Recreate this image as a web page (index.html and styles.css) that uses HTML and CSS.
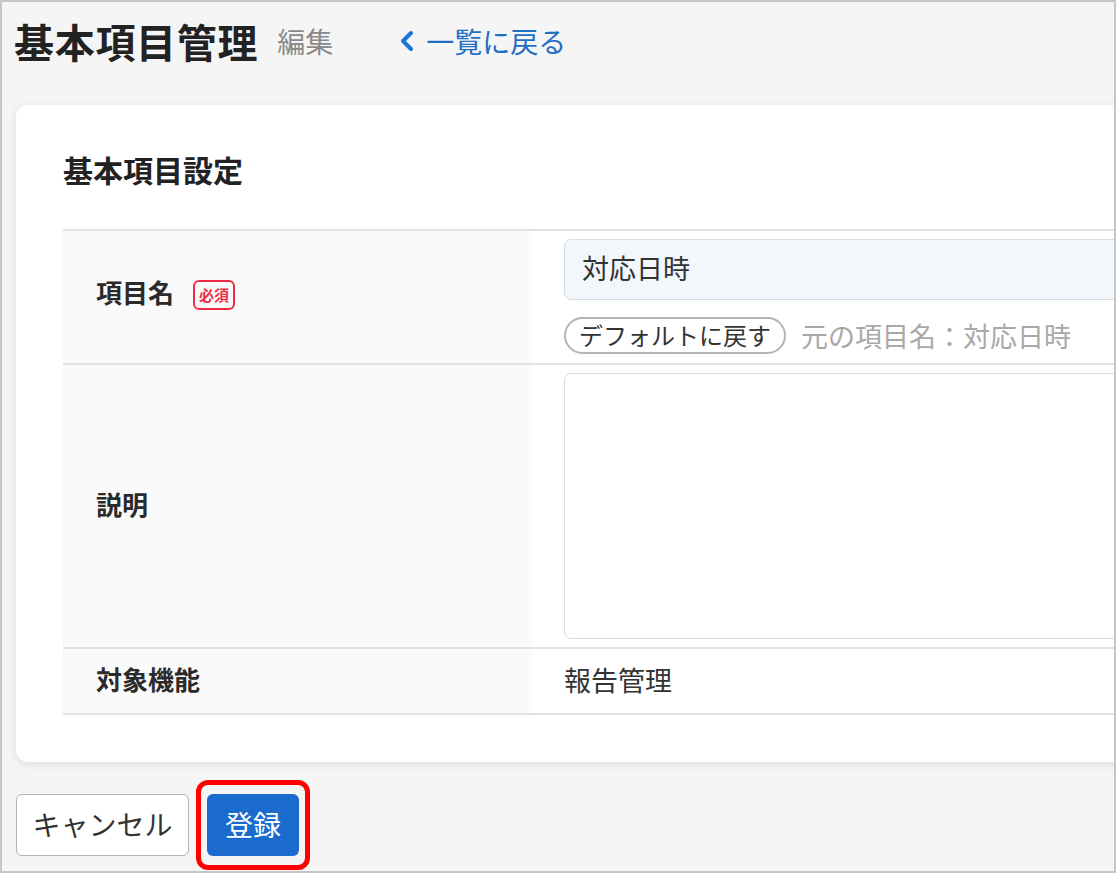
FILE: index.html
```html
<!DOCTYPE html>
<html lang="ja">
<head>
    <meta charset="UTF-8">
    <meta name="viewport" content="width=device-width, initial-scale=1.0">
    <title>基本項目管理 編集</title>
    <link rel="stylesheet" href="styles.css">
</head>
<body>
    <div class="screen">
        <!-- Page header -->
        <header class="page-header">
            <h1 class="page-title">基本項目管理</h1>
            <span class="page-mode">編集</span>
            <a class="back-link" href="#">
                <svg class="back-icon" width="14" height="22" viewBox="0 0 14 22" aria-hidden="true">
                    <polyline points="11,3 3,11 11,19" fill="none" stroke="currentColor" stroke-width="4" stroke-linecap="round" stroke-linejoin="round"/>
                </svg>
                一覧に戻る
            </a>
        </header>

        <!-- Settings card -->
        <section class="card">
            <h2 class="card-title">基本項目設定</h2>
            <table class="form-table">
                <tr class="row-name">
                    <th>項目名<span class="badge-required">必須</span></th>
                    <td>
                        <input class="text-input" type="text" value="対応日時">
                        <div class="default-row">
                            <button class="btn-pill" type="button">デフォルトに戻す</button>
                            <span class="original-name">元の項目名：対応日時</span>
                        </div>
                    </td>
                </tr>
                <tr class="row-desc">
                    <th>説明</th>
                    <td><textarea class="text-area"></textarea></td>
                </tr>
                <tr class="row-target">
                    <th>対象機能</th>
                    <td>報告管理</td>
                </tr>
            </table>
        </section>

        <!-- Form actions -->
        <div class="actions">
            <button class="btn btn-cancel" type="button">キャンセル</button>
            <span class="highlight">
                <button class="btn btn-submit" type="submit">登録</button>
            </span>
        </div>
    </div>
</body>
</html>
```

FILE: styles.css
```css
* {
    margin: 0;
    padding: 0;
    box-sizing: border-box;
}

body {
    background-color: #ffffff;
    font-family: "Noto Sans CJK JP", "Noto Sans", sans-serif;
    color: #333333;
}

.screen {
    width: 1116px;
    height: 873px;
    border: 2px solid #c6c6c6;
    background-color: #f5f5f5;
    overflow: hidden;
}

/* Header */
.page-header {
    display: flex;
    align-items: center;
    height: 78px;
    padding-left: 12px;
}

.page-title {
    font-size: 40px;
    line-height: 1;
    font-weight: 700;
    letter-spacing: 0.7px;
    color: #222222;
}

.page-mode {
    margin-left: 19px;
    font-size: 28px;
    line-height: 1;
    color: #8a8a8a;
}

.back-link {
    display: flex;
    align-items: center;
    margin-left: 67px;
    font-size: 28px;
    line-height: 1;
    color: #1f6fc5;
    text-decoration: none;
}

.back-icon {
    margin-right: 12px;
    color: #1d74d8;
}

/* Card */
.card {
    width: 1300px;
    margin: 25px 0 0 14px;
    padding: 44px 0 47px 47px;
    background-color: #ffffff;
    border-radius: 12px;
    box-shadow: 0 2px 8px rgba(0, 0, 0, 0.1);
}

.card-title {
    font-size: 30px;
    line-height: 40px;
    font-weight: 700;
    color: #222222;
    margin-bottom: 40px;
}

/* Table */
.form-table {
    width: 1200px;
    border-collapse: collapse;
    border-top: 2px solid #e2e2e2;
}

.form-table tr {
    border-bottom: 2px solid #e2e2e2;
}

.form-table th {
    width: 469px;
    padding: 0 0 4px 33px;
    background-color: #fafafa;
    text-align: left;
    vertical-align: middle;
    font-size: 26px;
    line-height: 1;
    font-weight: 700;
    color: #2a2a2a;
}

.form-table td {
    padding: 8px 0 9px 32px;
    font-size: 27px;
    line-height: 1;
    color: #333333;
    vertical-align: top;
}

.row-desc td {
    padding-bottom: 8px;
}

.row-target td {
    height: 66px;
    vertical-align: middle;
    padding-top: 0;
    padding-bottom: 4px;
}

.badge-required {
    display: inline-flex;
    align-items: center;
    justify-content: center;
    width: 42px;
    height: 30px;
    margin-left: 19px;
    border: 2px solid #ee2d45;
    border-radius: 6px;
    font-size: 15px;
    font-weight: 700;
    color: #ee2d45;
    vertical-align: middle;
    position: relative;
    top: -1px;
}

.text-input {
    display: block;
    width: 100%;
    height: 61px;
    padding: 0 0 5px 17px;
    background-color: #f2f7fc;
    border: 1px solid #d7dce2;
    border-radius: 7px;
    font-family: inherit;
    font-size: 27px;
    color: #333333;
}

.default-row {
    display: flex;
    align-items: center;
    margin-top: 17px;
}

.btn-pill {
    height: 37px;
    padding: 0 13px 2px;
    background-color: #ffffff;
    border: 2px solid #b4b4b4;
    border-radius: 19px;
    font-family: inherit;
    font-size: 24px;
    line-height: 1;
    color: #333333;
}

.original-name {
    margin-left: 15px;
    font-size: 27px;
    color: #a8a8a8;
}

.text-area {
    display: block;
    width: 100%;
    height: 266px;
    border: 1px solid #d7dce2;
    border-radius: 7px;
    background-color: #ffffff;
    resize: none;
    font-family: inherit;
}

/* Actions */
.actions {
    display: flex;
    align-items: center;
    margin: 18px 0 0 14px;
}

.btn {
    height: 62px;
    padding-bottom: 3px;
    border-radius: 6px;
    font-family: inherit;
    font-size: 28px;
    line-height: 1;
    cursor: pointer;
}

.btn-cancel {
    width: 173px;
    background-color: #ffffff;
    border: 1px solid #b3b3b3;
    color: #333333;
}

.btn-submit {
    width: 92px;
    background-color: #1a6bcd;
    border: none;
    color: #ffffff;
}

.highlight {
    display: inline-block;
    margin-left: 7px;
    padding: 9px 6px;
    border: 5px solid #ff0000;
    border-radius: 12px;
}
```
